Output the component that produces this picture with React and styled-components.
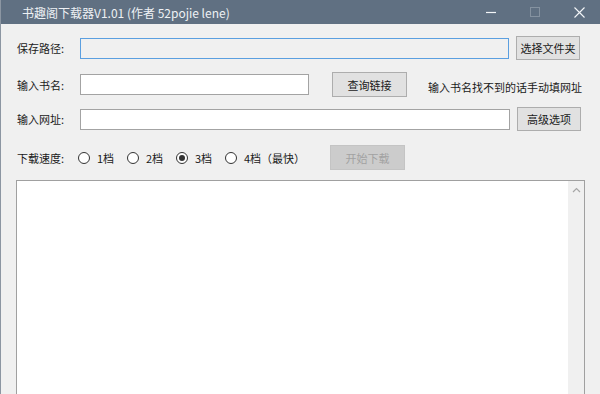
import React from "react";
import styled, { createGlobalStyle } from "styled-components";

const GlobalStyle = createGlobalStyle`
  html, body {
    margin: 0;
    padding: 0;
    background: #f0f0f0;
  }
  * { box-sizing: border-box; }
`;

const FONT = `"Noto Sans CJK SC", "Noto Sans", sans-serif`;

function App() {
  const speeds = ["1档", "2档", "3档", "4档（最快）"];
  return (
    <>
      <GlobalStyle />
      <Window>
        <TitleBar>
          <Title>书趣阁下载器V1.01 (作者 52pojie lene)</Title>
          <Controls>
            <CtrlBtn>
              <svg width="11" height="11" viewBox="0 0 11 11">
                <line x1="0" y1="5.5" x2="10" y2="5.5" stroke="#f4f6f8" strokeWidth="1.2" />
              </svg>
            </CtrlBtn>
            <CtrlBtn>
              <svg width="11" height="11" viewBox="0 0 11 11">
                <rect x="0.5" y="0.5" width="9" height="9" fill="none" stroke="#8592a0" strokeWidth="1" />
              </svg>
            </CtrlBtn>
            <CtrlBtn>
              <svg width="11" height="11" viewBox="0 0 11 11">
                <path d="M0.5 0.5 L10.5 10.5 M10.5 0.5 L0.5 10.5" stroke="#f4f6f8" strokeWidth="1.1" />
              </svg>
            </CtrlBtn>
          </Controls>
        </TitleBar>

        <Body>
          <Row top={12} h={24}>
            <Label>保存路径:</Label>
            <TextBox w={429} readOnly focused />
            <Button w={64} ml={7}>选择文件夹</Button>
          </Row>

          <Row top={12} h={25}>
            <Label>输入书名:</Label>
            <TextBox w={229} />
            <Button w={75} ml={23}>查询链接</Button>
            <Note>输入书名找不到的话手动填网址</Note>
          </Row>

          <Row top={10} h={24}>
            <Label>输入网址:</Label>
            <TextBox w={430} />
            <Button w={64} ml={7}>高级选项</Button>
          </Row>

          <Row top={14} h={25}>
            <Label>下载速度:</Label>
            <RadioGroup>
              {speeds.map((s, i) => (
                <RadioItem key={s} w={i < 3 ? 49 : 70}>
                  <RadioCircle checked={i === 2} />
                  <span>{s}</span>
                </RadioItem>
              ))}
            </RadioGroup>
            <Button w={75} ml={35} disabled>开始下载</Button>
          </Row>

          <LogBox>
            <LogArea />
            <ScrollBar>
              <svg width="9" height="6" viewBox="0 0 9 6">
                <path d="M1 5 L4.5 1.5 L8 5" fill="none" stroke="#a6a6a6" strokeWidth="1.2" />
              </svg>
            </ScrollBar>
          </LogBox>
        </Body>
      </Window>
    </>
  );
}

const Window = styled.div`
  width: 600px;
  height: 394px;
  overflow: hidden;
  display: flex;
  flex-direction: column;
  border-left: 1px solid #8c96a2;
  font-family: ${FONT};
  background: #f0f0f0;
`;

const TitleBar = styled.div`
  height: 24px;
  flex: none;
  background: #607082;
  display: flex;
  align-items: center;
  justify-content: space-between;
`;

const Title = styled.div`
  color: #eef1f4;
  font-size: 12px;
  margin-left: 21px;
  white-space: nowrap;
`;

const Controls = styled.div`
  display: flex;
  align-items: center;
  height: 100%;
  margin-right: -1px;
`;

const CtrlBtn = styled.div`
  width: 44px;
  height: 100%;
  display: flex;
  align-items: center;
  justify-content: center;
`;

const Body = styled.div`
  flex: 1;
  display: flex;
  flex-direction: column;
  padding: 0 0 0 15px;
  min-height: 0;
`;

const Row = styled.div`
  display: flex;
  align-items: center;
  height: ${p => p.h}px;
  margin-top: ${p => p.top}px;
  flex: none;
`;

const Label = styled.div`
  width: 64px;
  padding-left: 1px;
  font-size: 11px;
  color: #1a1a1a;
  white-space: nowrap;
`;

const TextBox = styled.input`
  width: ${p => p.w}px;
  height: 21px;
  border: 1px solid ${p => (p.focused ? "#5b9fe0" : "#a3a3a3")};
  background: ${p => (p.readOnly ? "#f0f0f0" : "#ffffff")};
  outline: none;
  padding: 0 3px;
  font-family: ${FONT};
  font-size: 11px;
`;

const Button = styled.button`
  width: ${p => p.w}px;
  height: 100%;
  margin-left: ${p => p.ml}px;
  background: ${p => (p.disabled ? "#cccccc" : "#e1e1e1")};
  border: 1px solid ${p => (p.disabled ? "#c4c4c4" : "#adadad")};
  color: ${p => (p.disabled ? "#a2a2a2" : "#1a1a1a")};
  font-family: ${FONT};
  font-size: 11px;
  padding: 0;
  white-space: nowrap;
`;

const Note = styled.div`
  margin-left: 21px;
  margin-top: 5px;
  font-size: 11px;
  color: #1a1a1a;
  white-space: nowrap;
`;

const RadioGroup = styled.div`
  display: flex;
  align-items: center;
  margin-left: -2px;
`;

const RadioItem = styled.label`
  width: ${p => p.w}px;
  display: flex;
  align-items: center;
  gap: 7px;
  font-size: 11px;
  color: #1a1a1a;
  white-space: nowrap;
`;

const RadioCircle = styled.span`
  width: 12px;
  height: 12px;
  border-radius: 50%;
  border: 1px solid #333333;
  background: #ffffff;
  position: relative;
  flex: none;
  &::after {
    content: "";
    display: ${p => (p.checked ? "block" : "none")};
    position: absolute;
    left: 2px;
    top: 2px;
    width: 6px;
    height: 6px;
    border-radius: 50%;
    background: #333333;
  }
`;

const LogBox = styled.div`
  margin-top: 10px;
  width: 569px;
  flex: 1;
  display: flex;
  border: 1px solid #a0a0a0;
  border-bottom: none;
  background: #ffffff;
`;

const LogArea = styled.div`
  flex: 1;
  background: #ffffff;
`;

const ScrollBar = styled.div`
  width: 17px;
  background: #f0f0f0;
  border-left: 1px solid #ffffff;
  display: flex;
  justify-content: center;
  padding-top: 6px;
`;

export default App;
